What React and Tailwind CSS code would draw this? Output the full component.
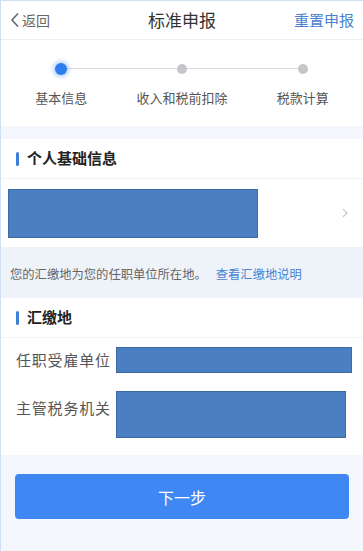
import React from "react";

const font = { fontFamily: '"Noto Sans CJK SC", "Noto Sans", sans-serif' };

const Step = ({ label, active }) => (
  <div className="flex flex-col items-center w-[121px]">
    <div className="h-[22px] flex items-center">
      {active ? (
        <span className="block w-[12px] h-[12px] rounded-full bg-[#2f7cf0] shadow-[0_0_4px_2px_rgba(47,124,240,0.35)]" />
      ) : (
        <span className="block w-[10px] h-[10px] rounded-full bg-[#c4c6c9]" />
      )}
    </div>
    <span className="mt-[11px] text-[13px] leading-[14px] text-[#555]">{label}</span>
  </div>
);

const SectionTitle = ({ children }) => (
  <div className="flex items-center h-[40px] pl-[15px] bg-white border-b border-[#f2f3f5]">
    <span className="w-[3px] h-[14px] bg-[#3d7fd6] rounded-sm" />
    <span className="ml-[8px] text-[15px] font-bold text-[#222]">{children}</span>
  </div>
);

const Redact = ({ className }) => (
  <div className={"bg-[#4a7fc1] border border-[#3e6aa2] " + className} />
);

export default function App() {
  return (
    <div style={font} className="w-[363px] h-[551px] bg-[#f3f6fa] overflow-hidden border-t border-l border-[#cfe0f6]">
      {/* nav */}
      <div className="relative flex items-center justify-between h-[39px] px-[9px] bg-white border-b border-[#eceef1]">
        <div className="flex items-center text-[14px] text-[#666]">
          <svg width="10" height="16" viewBox="0 0 10 16" fill="none" stroke="#666" strokeWidth="1.6">
            <path d="M8 1.5 L2 8 L8 14.5" />
          </svg>
          <span className="ml-[2px]">返回</span>
        </div>
        <span className="absolute left-1/2 -translate-x-1/2 text-[17px] text-[#333]">标准申报</span>
        <span className="text-[15px] text-[#4a7fcf]">重置申报</span>
      </div>

      {/* stepper */}
      <div className="relative bg-white h-[86px] pt-[18px]">
        <div className="absolute top-[28px] left-[62px] right-[62px] h-px bg-[#d9dbde]" />
        <div className="relative flex w-full">
          <Step label="基本信息" active />
          <Step label="收入和税前扣除" />
          <Step label="税款计算" />
        </div>
      </div>

      <div className="h-[13px]" />

      <SectionTitle>个人基础信息</SectionTitle>
      <div className="flex items-center justify-between h-[68px] bg-white pl-[7px] pr-[15px]">
        <Redact className="w-[250px] h-[49px]" />
        <svg width="6" height="10" viewBox="0 0 6 10" fill="none" stroke="#c8c8c8" strokeWidth="1.2">
          <path d="M1 1 L5 5 L1 9" />
        </svg>
      </div>

      <div className="h-[51px] pt-[21px] px-[9px] bg-[#eef3fa] text-[12.3px] leading-[13px] text-[#666] whitespace-nowrap">
        您的汇缴地为您的任职单位所在地。
        <span className="ml-[9px] text-[#4a84d2]">查看汇缴地说明</span>
      </div>

      <SectionTitle>汇缴地</SectionTitle>
      <div className="bg-white">
        <div className="flex items-center h-[44px] pl-[15px] pr-[11px]">
          <span className="text-[15px] leading-[20px] text-[#555] w-[100px] shrink-0 tracking-[0.8px]">任职受雇单位</span>
          <Redact className="flex-1 h-[26px]" />
        </div>
        <div className="flex items-start h-[73px] pl-[15px] pr-[17px] pt-[9px]">
          <span className="text-[15px] leading-[20px] text-[#555] w-[100px] shrink-0 mt-[7px] tracking-[0.8px]">主管税务机关</span>
          <Redact className="flex-1 h-[47px]" />
        </div>
      </div>

      <div className="px-[14px] pt-[19px]">
        <button className="w-full h-[45px] rounded-[4px] bg-[#3f87f2] text-white text-[16px]">下一步</button>
      </div>
    </div>
  );
}
